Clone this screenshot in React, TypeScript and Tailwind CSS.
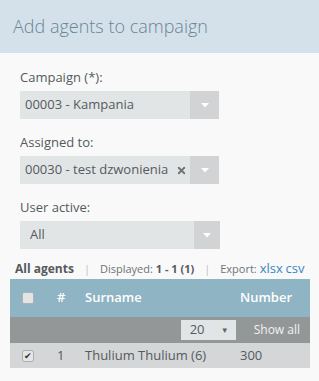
import { X } from "lucide-react"

function Caret() {
  return (
    <svg width="8" height="5" viewBox="0 0 8 5" className="block">
      <path d="M0 0 L8 0 L4 4.5 Z" fill="#ffffff" />
    </svg>
  )
}

function Select({ value, clear, wide }: { value: string; clear?: boolean; wide?: boolean }) {
  return (
    <div className={`flex h-[28px] bg-[#e2e5e6] ${wide ? "w-[200px]" : "w-[199px]"}`}>
      <div
        className={`flex-1 flex items-center text-[13px] text-[#555a5e] whitespace-nowrap overflow-hidden ${
          wide ? "pl-[10px]" : "pl-[5px]"
        }`}
      >
        {value}
      </div>
      {clear && (
        <div className="flex items-center pr-[3px] text-[#6b7377]">
          <X size={11} strokeWidth={4} />
        </div>
      )}
      <div className={`flex items-center justify-center bg-[#d2d3d4] ${wide ? "w-[26px]" : "w-[29px]"}`}>
        <Caret />
      </div>
    </div>
  )
}

export default function App() {
  return (
    <div className="w-[319px] h-[381px] bg-[#f9f9f9] font-['Open_Sans',sans-serif] overflow-hidden">
      {/* HEADER */}
      <div className="h-[53px] bg-[#d5e1ea] flex items-center pl-[13px]">
        <h1 className="text-[18px] font-light text-[#6a8597]">Add agents to campaign</h1>
      </div>

      {/* FORM */}
      <div className="px-[20px] pt-[14px]">
        <label className="block text-[13px] text-[#555a5e] leading-[20px]">Campaign (*):</label>
        <div className="mt-[4px]">
          <Select value="00003 - Kampania" />
        </div>

        <label className="block text-[13px] text-[#555a5e] leading-[20px] mt-[13px]">Assigned to:</label>
        <div className="mt-[4px]">
          <Select value="00030 - test dzwonienia" clear />
        </div>

        <label className="block text-[13px] text-[#555a5e] leading-[20px] mt-[13px]">User active:</label>
        <div className="mt-[4px]">
          <Select value="All" wide />
        </div>
      </div>

      {/* TABLE BAR */}
      <div className="px-[10px] mt-[10px]">
        <div className="flex items-center text-[11px] text-[#6e7376] pl-[5px] h-[20px] whitespace-nowrap">
          <span className="text-[12px] font-bold text-[#555a5e]">All agents</span>
          <span className="mx-[10px] text-[#b9bec1]">|</span>
          <span>
            Displayed: <b className="font-bold text-[#555a5e]">1 - 1 (1)</b>
          </span>
          <span className="mx-[10px] text-[#b9bec1]">|</span>
          <span>
            Export: <a className="text-[#3a86c0] text-[13px]">xlsx</a>{" "}
            <a className="text-[#3a86c0] text-[13px]">csv</a>
          </span>
        </div>

        <table className="w-[300px] table-fixed border-collapse text-[13px]">
          <colgroup>
            <col className="w-[37px]" />
            <col className="w-[38px]" />
            <col className="w-[155px]" />
            <col className="w-[70px]" />
          </colgroup>
          <thead>
            <tr className="h-[38px] bg-[#8fb4c3] text-white">
              <th className="pl-[12px] text-left">
                <span className="block w-[12px] h-[12px] rounded-[2px] bg-[#e4e4e4] border border-[#a9b3b8]" />
              </th>
              <th className="text-left pl-[10px] font-semibold">#</th>
              <th className="text-left font-semibold">Surname</th>
              <th className="text-left font-semibold">Number</th>
            </tr>
            <tr className="h-[26px] bg-[#939797]">
              <th colSpan={4} className="p-0">
                <div className="flex items-center justify-end gap-[18px] pr-[10px]">
                  <div className="flex items-center w-[55px] h-[20px] bg-[#e2e5e6] pl-[9px] text-[13px] font-normal text-[#555a5e]">
                    <span>20</span>
                    <span className="ml-auto mr-[7px] text-[8px] text-[#5f6569]">▼</span>
                  </div>
                  <span className="text-[12px] font-normal text-[#f2f2f2]">Show all</span>
                </div>
              </th>
            </tr>
          </thead>
          <tbody>
            <tr className="h-[25px] bg-[#d4d6d7] text-[#555a5e]">
              <td className="pl-[12px]">
                <span className="flex items-center justify-center w-[12px] h-[12px] rounded-[2px] bg-[#e6e6e6] border border-[#a9b0b3] text-[9px] leading-none text-[#333]">
                  ✔
                </span>
              </td>
              <td className="pl-[10px]">1</td>
              <td>Thulium Thulium (6)</td>
              <td>300</td>
            </tr>
          </tbody>
        </table>
      </div>
    </div>
  )
}
